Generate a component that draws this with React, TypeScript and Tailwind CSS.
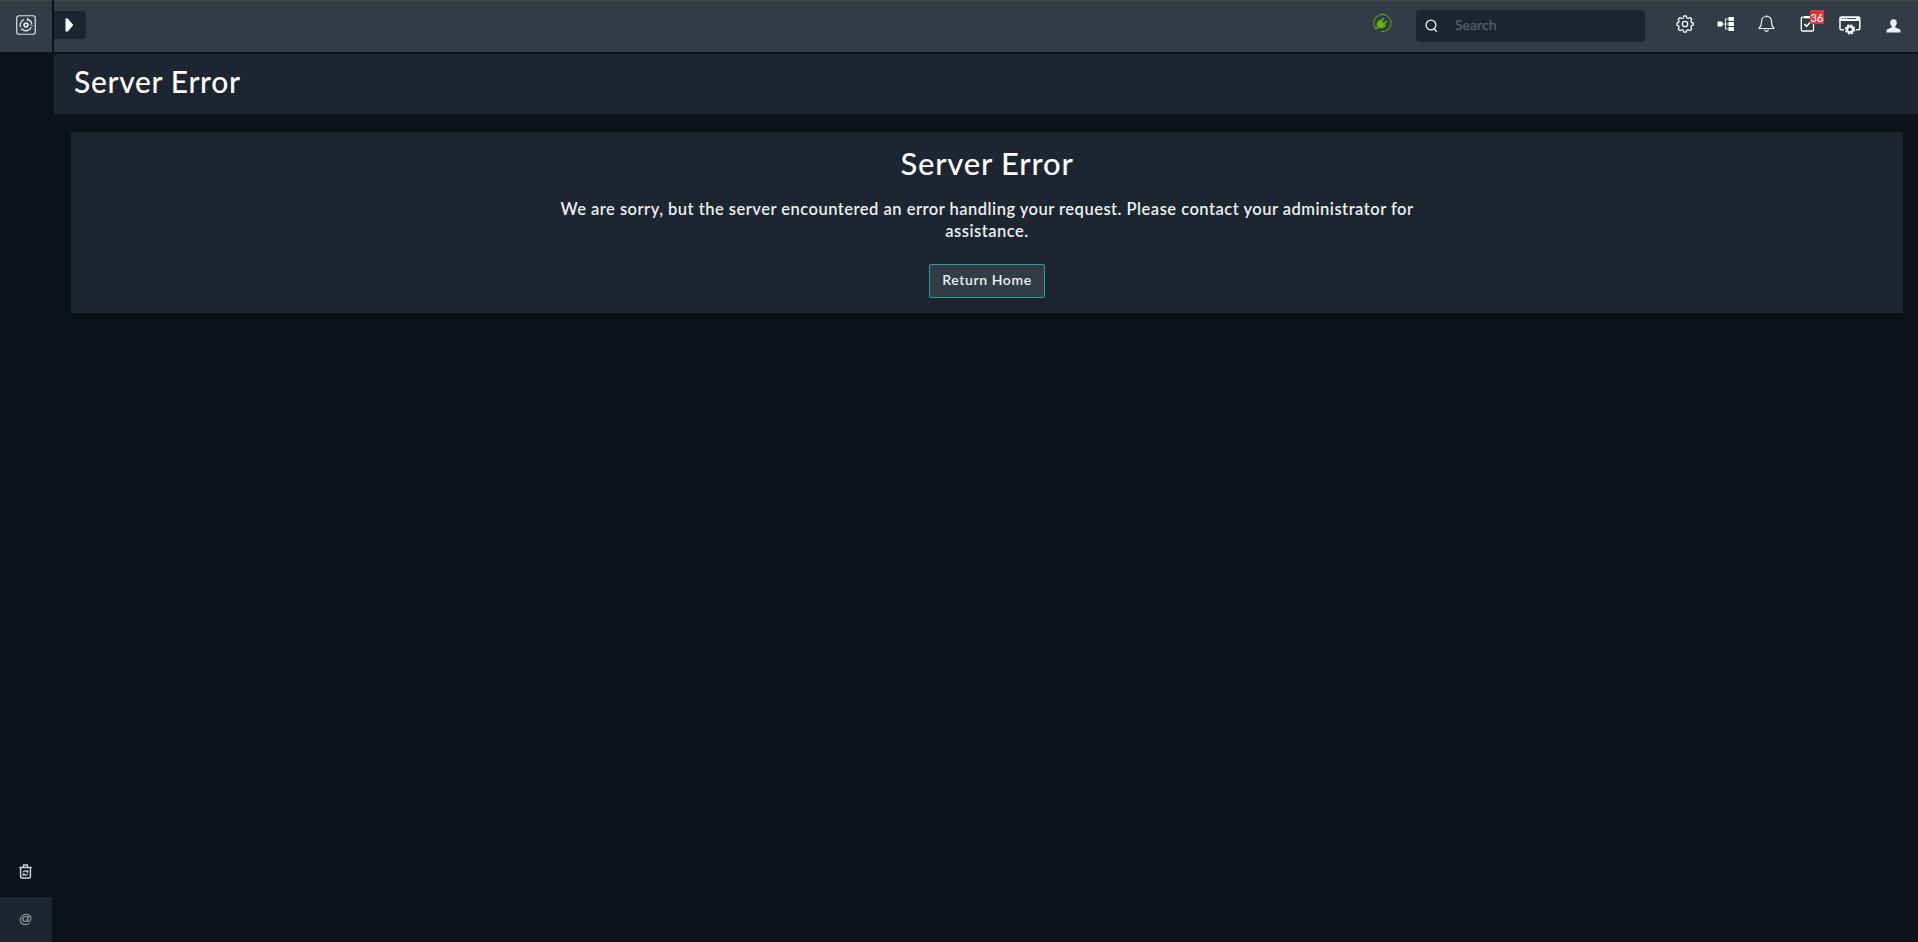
import React from "react";

const LogoIcon = () => (
  <svg width="20" height="20" viewBox="0 0 20 20" fill="none" stroke="#dde1e8">
    <rect x="0.75" y="0.75" width="18.5" height="18.5" rx="2.2" strokeWidth="1.2" />
    <circle cx="10" cy="10" r="1.9" strokeWidth="1.8" />
    <path d="M4.6 12.2A5.8 5.8 0 0 1 8 4.6M11.2 4.3A5.8 5.8 0 0 1 15.7 9M15.3 12.3A5.8 5.8 0 0 1 5.8 14" strokeWidth="1.4" />
    <path d="M11.4 2.8v3.2M14.4 9.6l2.4 1.2M4.8 15.4l1.6-2.2" strokeWidth="1" />
  </svg>
);

const PlugIcon = () => (
  <svg width="20" height="20" viewBox="0 0 20 20" fill="none">
    <path d="M4.2 16A8.6 8.6 0 1 1 9.4 18.6" stroke="#5a9e1c" strokeWidth="1.1" />
    <path d="M8.6 6.6l5.4 6c-1.8 2.7-4.8 3.4-7.3 2L4.4 16.6l-1-1 1.9-1.9C4 11 5.4 7.6 8.6 6.6z" fill="#63b10c" />
    <path d="M9.2 8.2l2.7-3M12 11l2.8-3" stroke="#63b10c" strokeWidth="1.7" />
  </svg>
);

const SearchIcon = () => (
  <svg width="13" height="14" viewBox="0 0 13 14" fill="none" stroke="#eef0f2" strokeWidth="1.3">
    <circle cx="6" cy="6" r="4.9" />
    <path d="M8.8 9.4l3 3.3" />
  </svg>
);

const GearIcon = () => (
  <svg width="18" height="18" viewBox="0 0 18 18" fill="none" stroke="#f1f3f4" strokeWidth="1.3" strokeLinejoin="round">
    <circle cx="9" cy="9" r="2.7" />
    <path d="M7.7 1h2.6l.5 1.9 1.5.6 1.7-1 1.8 1.8-1 1.7.6 1.5 1.9.5v2.2l-1.900.5-.6 1.500 1 1.700-1.800 1.800-1.700-1-1.500.6-.5 1.700H7.700l-.5-1.700-1.500-.6-1.700 1-1.800-1.800 1-1.700-.6-1.500L1 10.300V7.700l1.600-.2.600-1.500-1-1.700L4 2.500l1.700 1 1.500-.6z" />
  </svg>
);

const TreeIcon = () => (
  <svg width="18" height="16" viewBox="0 0 18 16">
    <path d="M5 8h7M12 3H8.5v10H12" fill="none" stroke="#d3dbe2" strokeWidth="1.2" />
    <rect x="0.5" y="5.5" width="5" height="5" rx=".5" fill="#fff" />
    <rect x="11.5" y="1" width="5.5" height="4" rx=".4" fill="#fff" />
    <rect x="11.5" y="6" width="5.5" height="4" rx=".4" fill="#fff" />
    <rect x="11.5" y="11" width="5.5" height="4" rx=".4" fill="#fff" />
  </svg>
);

const BellIcon = () => (
  <svg width="17" height="18" viewBox="0 0 17 18" fill="none" stroke="#eef1f3" strokeWidth="1.2" strokeLinejoin="round">
    <path d="M8.5 1.5c-3.2 0-4.9 2.1-4.9 4.8 0 3.600-.6 5.100-2.600 7.200h15c-2-2.100-2.600-3.600-2.600-7.200 0-2.700-1.700-4.800-4.900-4.800z" />
    <path d="M6.700 14.500a1.800 1.800 0 0 0 3.600 0M8.500.3v1.200" />
  </svg>
);

const TaskIcon = () => (
  <svg width="15" height="17" viewBox="0 0 15 17" fill="none" stroke="#fff">
    <rect x="1.3" y="2.2" width="12.2" height="13.8" rx="1" strokeWidth="1.3" />
    <path d="M4 2.2h6" strokeWidth="2.4" />
    <path d="M4.4 9l2.2 2.3L10.600 7" strokeWidth="1.6" />
  </svg>
);

const WindowGearIcon = () => (
  <svg width="22" height="19" viewBox="0 0 22 19" fill="none">
    <path d="M5 13.8H2.3A1.3 1.3 0 0 1 1 12.5V2.3A1.3 1.3 0 0 1 2.3 1h17.2a1.3 1.3 0 0 1 1.3 1.3v10.2a1.3 1.3 0 0 1-1.3 1.3h-2.7" stroke="#fff" strokeWidth="1.5" />
    <path d="M1 1h20v4H1z" fill="#fff" />
    <path d="M3 2.6h1.4M5.5 2.6h1.4M8 2.6h9" stroke="#323c46" strokeWidth="1" />
    <circle cx="11" cy="13.4" r="3" stroke="#fff" strokeWidth="2.3" />
    <circle cx="11" cy="13.4" r="4.5" stroke="#fff" strokeWidth="1.4" strokeDasharray="2 1.534" />
  </svg>
);

const UserIcon = () => (
  <svg width="15" height="14" viewBox="0 0 15 14" fill="#f0f0f0">
    <path d="M7.5.3c2.1 0 3.3 1.5 3.3 3.5 0 1.500-.6 2.800-1.500 3.500v1.300l3.700 1.500c1 .4 1.500 1.200 1.500 2.200v1.200H.5v-1.200c0-1 .5-1.800 1.500-2.200l3.700-1.500V7.300c-.9-.7-1.500-2-1.500-3.500C4.200 1.800 5.400.3 7.500.3z" />
  </svg>
);

const BinIcon = () => (
  <svg width="13" height="15" viewBox="0 0 13 15" fill="none" stroke="#ccd3df">
    <path d="M.3 3.5h12.4" strokeWidth="1.5" />
    <path d="M4.5 3V1h4v2" strokeWidth="1.3" />
    <path d="M1.6 4v8.8c0 .8.5 1.3 1.3 1.3h7.2c.8 0 1.3-.5 1.3-1.3V4" strokeWidth="1.5" />
    <path d="M4.2 8.3c.4-1.5 2.8-2 3.9-.6M8.8 9.7c-.4 1.5-2.8 2-3.9.6M8.8 6v2H7M4.2 12v-2H6" strokeWidth="1.1" />
  </svg>
);

export default function App() {
  return (
    <div className="flex h-[942px] w-full flex-col overflow-hidden bg-[#0d1218] font-['Lato',sans-serif] text-white">
      <header className="flex h-[52px] shrink-0 gap-[2px]">
        <div className="flex w-[52px] items-center border-t border-[#474747] bg-[#323c46] pb-[4px] pl-[15.5px]">
          <LogoIcon />
        </div>
        <div className="flex flex-1 items-start border-t border-[#474747] bg-[#323c46]">
          <button className="mt-[10px] flex h-7 w-8 items-center rounded-r-sm bg-[#1c2530] pb-px pl-[11px]" aria-label="Expand menu">
            <svg width="9" height="14" viewBox="0 0 9 14"><path d="M.5.5h2.3L8.3 7l-5.5 6.5H.5z" fill="#fff" /></svg>
          </button>
          <div className="ml-auto mt-[12px]"><PlugIcon /></div>
          <label className="ml-[24px] mt-[9px] flex h-8 w-[229px] items-center rounded-sm bg-[#1c2530] pl-[9px]">
            <SearchIcon />
            <input placeholder="Search" className="mb-[2px] ml-[17px] w-40 bg-transparent text-sm font-semibold outline-none placeholder:text-[#55606a]" />
          </label>
          <nav className="ml-[31px] mt-[14px] flex h-5 w-[242px] items-start">
            <div className="w-[41px]"><GearIcon /></div>
            <div className="mt-px w-[41px]"><TreeIcon /></div>
            <div className="w-[42px]"><BellIcon /></div>
            <div className="relative w-[39px]">
              <TaskIcon />
              <span className="absolute -top-[5px] left-[10px] flex h-[14px] w-[14px] items-center justify-center rounded-[1px] bg-[#d9363e] text-[11px] font-medium leading-none">36</span>
            </div>
            <div className="mt-px w-[47px]"><WindowGearIcon /></div>
            <div className="mt-[4px]"><UserIcon /></div>
          </nav>
        </div>
      </header>
      <div className="flex min-h-0 flex-1 gap-[2px]">
        <aside className="flex w-[52px] shrink-0 flex-col justify-end">
          <button className="mb-[18px] ml-[19px]" aria-label="Recycle bin"><BinIcon /></button>
          <div className="flex h-[45px] items-center justify-center bg-[#1c2530] pr-px font-['Liberation_Sans',sans-serif] text-[13.5px] text-[#a9adb3]">@</div>
        </aside>
        <div className="flex flex-1 flex-col pt-[2px]">
          <div className="flex h-[60px] items-center bg-[#1c2530] pb-[6px] pl-5">
            <h1 className="text-[30px] font-medium leading-9 tracking-[0.68px]">Server Error</h1>
          </div>
          <main className="ml-[17px] mr-[15px] mt-[18px] flex h-[181px] flex-col items-center bg-[#1c2530]">
            <h2 className="mt-[12px] text-[31px] font-medium leading-[38px] tracking-[0.78px]">Server Error</h2>
            <p className="mt-[16px] w-[916px] text-center text-[16.5px] font-semibold leading-[22px] tracking-[0.49px] text-[#eceef0]">
              We are sorry, but the server encountered an error handling your request. Please contact your administrator for assistance.
            </p>
            <button className="mt-[22px] h-[34px] w-[116px] rounded-[2px] border border-[#2a9ba3] bg-[#323c46] pb-[3px] text-[14px] font-semibold tracking-[0.6px] text-[#eceef0]">Return Home</button>
          </main>
        </div>
      </div>
    </div>
  );
}
